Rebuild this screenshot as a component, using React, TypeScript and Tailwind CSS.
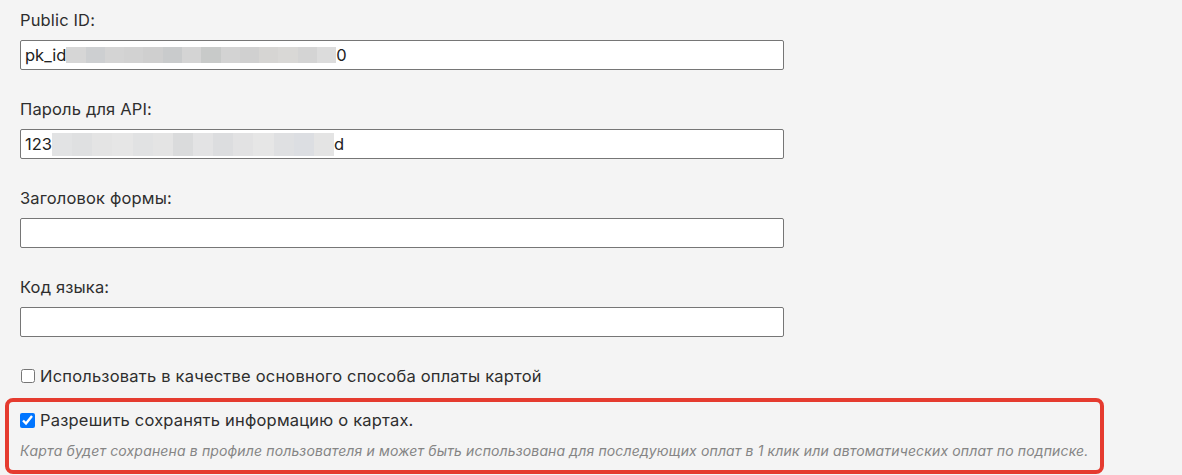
import React from 'react';

// pixelated blur that hides part of a secret value
const Blur: React.FC<{ w: number; cells: string[]; h?: string }> = ({ w, cells, h = 'h-[16px]' }) => (
  <span className={`inline-flex ${h}`} style={{ width: w }}>
    {cells.map((c, i) => (
      <span key={i} className="flex-1 h-full" style={{ background: c }} />
    ))}
  </span>
);

const Field: React.FC<{ label: string; children?: React.ReactNode }> = ({ label, children }) => (
  <div className="mb-[27px]">
    <div className="text-[16.5px] leading-6 tracking-[0.15px] text-[#2e2e2e]">{label}</div>
    <div className="mt-2 h-[30px] w-[764px] bg-white border border-[#767676] rounded-[2px] flex items-center px-[4px] text-[16.5px] text-[#222]">
      {children}
    </div>
  </div>
);

export default function App() {
  return (
    <div className="min-h-screen bg-[#f4f4f4] pt-2" style={{ fontFamily: 'Inter, "Noto Sans", sans-serif' }}>
      <div className="pl-5">
        <Field label="Public ID:">
          <span>pk_id</span>
          <Blur
            w={270}
            cells={['#d6d6d6', '#cdcfd1', '#d4d4d4', '#d2d2d2', '#cfcfcf', '#c9cbcc', '#d4d4d4', '#c8cac9', '#d3d3d3', '#d0d0d0', '#d6d5d3', '#d9d8d6', '#d4d4d4', '#dcdcdc']}
          />
          <span>0</span>
        </Field>
        <Field label="Пароль для API:">
          <span>123</span>
          <Blur
            w={282}
            h="h-[23px]"
            cells={['#e2e3e4', '#dfe0e1', '#e4e4e4', '#e6e6e6', '#e1e2e3', '#e4e4e4', '#dadbdc', '#e3e3e4', '#dcdddf', '#e2e2e3', '#e6e6e6', '#dfe0e2', '#dcdee2', '#e4e4e4']}
          />
          <span>d</span>
        </Field>
        <Field label="Заголовок формы:" />
        <Field label="Код языка:" />

        <label className="flex items-center text-[16.5px] leading-6 tracking-[0.2px] text-[#2e2e2e] mt-[1px]">
          <input type="checkbox" className="w-[14px] h-[14px] m-0 ml-[1px] mr-[5px]" />
          Использовать в качестве основного способа оплаты картой
        </label>
      </div>

      <div className="mt-[10px] ml-[5px] w-[1099px] border-4 border-[#e53b2f] rounded-[8px] pl-[11px] pt-[6px] pb-[9px]">
        <label className="flex items-center text-[16.5px] leading-6 tracking-[0.2px] text-[#2e2e2e]">
          <input type="checkbox" defaultChecked className="w-[15px] h-[15px] m-0 mr-[5px]" />
          Разрешить сохранять информацию о картах.
        </label>
        <p className="mt-[9px] text-[14px] leading-5 italic tracking-[0.14px] text-[#858585]">
          Карта будет сохранена в профиле пользователя и может быть использована для последующих оплат в 1 клик или автоматических оплат по подписке.
        </p>
      </div>
    </div>
  );
}
